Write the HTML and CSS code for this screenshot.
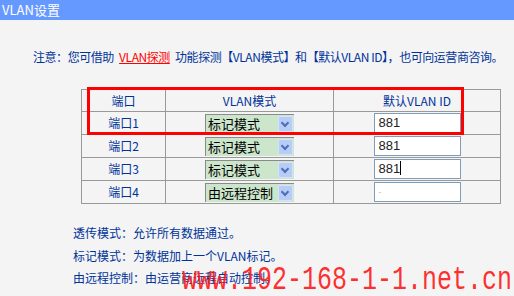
FILE: index.html
```html
<!DOCTYPE html>
<html lang="zh-CN">
<head>
  <meta charset="UTF-8">
  <title>VLAN设置</title>
  <link rel="stylesheet" href="styles.css">
</head>
<body>
  <div class="header">VLAN设置</div>

  <p class="note">注意：您可借助 <a href="#">VLAN探测</a> 功能探测【VLAN模式】和【默认VLAN ID】，也可向运营商咨询。</p>

  <div class="grid-wrap">
    <table class="ports">
      <tr class="head">
        <td class="c1">端口</td>
        <td class="c2">VLAN模式</td>
        <td class="c3">默认VLAN ID</td>
      </tr>
      <tr>
        <td>端口1</td>
        <td><div class="sel"><span class="val">标记模式</span><span class="arrow"></span></div></td>
        <td><div class="vid">881</div></td>
      </tr>
      <tr>
        <td>端口2</td>
        <td><div class="sel"><span class="val">标记模式</span><span class="arrow"></span></div></td>
        <td><div class="vid">881</div></td>
      </tr>
      <tr>
        <td>端口3</td>
        <td><div class="sel"><span class="val">标记模式</span><span class="arrow"></span></div></td>
        <td><div class="vid">881<span class="caret"></span></div></td>
      </tr>
      <tr>
        <td>端口4</td>
        <td><div class="sel"><span class="val">由远程控制</span><span class="arrow"></span></div></td>
        <td><div class="vid empty">-</div></td>
      </tr>
    </table>
    <div class="highlight"></div>
  </div>

  <div class="legend">
    <p>透传模式：允许所有数据通过。</p>
    <p>标记模式：为数据加上一个VLAN标记。</p>
    <p>由远程控制：由运营商远程自动控制。</p>
  </div>

  <div class="watermark">www.192-168-1-1.net.cn</div>
</body>
</html>
```

FILE: styles.css
```css
body {
  margin: 0;
  background: #f4f4f4;
  font-family: "Noto Sans CJK SC", "DejaVu Sans", sans-serif;
  font-size: 12px;
  color: #003399;
  position: relative;
  height: 296px;
  overflow: hidden;
}
.header {
  background: #6699ff;
  color: #fff;
  height: 20px;
  line-height: 20px;
  padding-left: 2px;
  font-size: 13px;
}
.note {
  margin: 29px 0 0 0;
  padding-left: 33px;
  line-height: 16px;
  white-space: nowrap;
  letter-spacing: -0.45px;
}
.note a {
  color: #ff0000;
  text-decoration: underline;
  margin: 0 3px;
}
.grid-wrap {
  position: relative;
  margin: 24px 0 0 81px;
  width: 420px;
}
.ports {
  border-collapse: collapse;
  width: 420px;
  table-layout: fixed;
}
.ports td {
  border: 1px solid #999;
  text-align: center;
  height: 22px;
  padding: 0;
  line-height: 16px;
}
.ports .head td {
  height: 21px;
}
.ports .c1 { width: 83px; }
.ports .c2 { width: 167px; }
.ports .c3 { width: 166px; }
.sel {
  display: flex;
  width: 89px;
  height: 19px;
  margin: 0 auto;
  box-sizing: border-box;
  border-top: 1px solid #8a8a8a;
  border-left: 1px solid #8a8a8a;
  background: #cce6cc;
  color: #000;
  font-size: 13px;
}
.sel .val {
  flex: 1;
  text-align: left;
  padding-left: 2px;
  line-height: 18px;
}
.sel .arrow {
  width: 15px;
  margin: 1px 1px 1px 0;
  background: #b8cdf5;
  border: 1px solid #d6e2fb;
  box-sizing: border-box;
  position: relative;
}
.sel .arrow::after {
  content: "";
  position: absolute;
  left: 3px;
  top: 3px;
  width: 4px;
  height: 4px;
  border-right: 2px solid #4d6fb8;
  border-bottom: 2px solid #4d6fb8;
  transform: rotate(45deg);
}
.vid {
  width: 87px;
  height: 20px;
  margin: 0 auto;
  box-sizing: border-box;
  border: 1px solid #7f9db9;
  background: #fff;
  color: #222;
  font-family: "Liberation Sans", Arial, sans-serif;
  font-size: 13px;
  line-height: 18px;
  text-align: left;
  padding-left: 4px;
}
.vid .caret {
  display: inline-block;
  width: 1px;
  height: 14px;
  background: #000;
  vertical-align: -2px;
}
.vid.empty {
  color: #c9a27a;
  font-size: 8px;
}
.highlight {
  position: absolute;
  left: 6px;
  top: -2px;
  width: 371px;
  height: 42px;
  border: 3px solid #ff0000;
}
.legend {
  margin: 18px 0 0 73px;
}
.legend p {
  margin: 0;
  line-height: 22.5px;
}
.watermark {
  position: absolute;
  left: 182px;
  top: 262px;
  font-family: "Liberation Mono", monospace;
  font-size: 25px;
  color: rgba(255, 20, 20, 0.9);
  transform: scaleY(1.3);
  transform-origin: left top;
  white-space: nowrap;
}
```
